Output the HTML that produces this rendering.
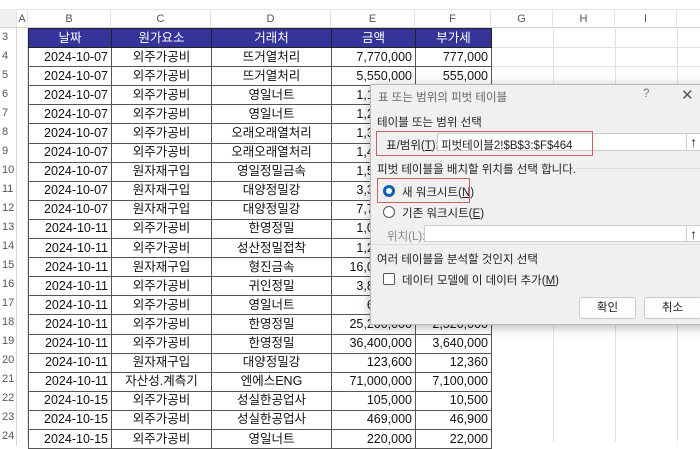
<!DOCTYPE html>
<html><head><meta charset="utf-8"><style>
*{margin:0;padding:0;box-sizing:border-box}
body{width:700px;height:442px;overflow:hidden;background:#fff;font-family:"Liberation Sans","Noto Sans CJK KR",sans-serif;position:relative}
.top{position:absolute;left:0;top:0;width:700px;height:10px;background:#fff;border-bottom:1px solid #e6e6e6}
.colh{position:absolute;top:10px;height:18px;background:#fff;border-bottom:1px solid #d4d4d4;font-size:11px;color:#555;text-align:center;line-height:18px;border-right:1px solid #e3e3e3}
.rowh{position:absolute;left:0;width:17px;height:19.1px;font-size:11px;color:#555;line-height:19px;padding-left:2px;border-right:1px solid #d4d4d4}
table{position:absolute;left:28px;top:28px;border-collapse:collapse;table-layout:fixed}
td{height:19.1px;border:1px solid #555;font-size:12.5px;color:#111;white-space:nowrap;overflow:hidden;padding:0 3px;line-height:17px}
td.c{text-align:center}td.r{text-align:right}
tr.h td{background:#333399;color:#fff;text-align:center;border-color:#222}
.gl{position:absolute;background:#e1e1e1}
.dlg{position:absolute;left:370px;top:84px;width:340px;height:241px;background:#f0f0f0;border:1px solid #bbb;box-shadow:0 2px 10px rgba(0,0,0,.3);font-size:11.5px;color:#222}
.dlg .t{position:absolute;left:7px;top:4px;color:#666;font-size:11.5px}
.ab{position:absolute}
.inp{position:absolute;background:#fff;border:1px solid #ccc;height:18px}
.up{position:absolute;width:15px;height:18px;background:#fff;border:1px solid #ccc;font-size:14px;font-weight:bold;text-align:center;line-height:16px}
.red{position:absolute;border:1.5px solid #d06060}
.btn{position:absolute;width:57px;height:22px;background:#fdfdfd;border:1px solid #ccc;border-radius:3px;text-align:center;line-height:20px}
.sep{position:absolute;height:1px;background:#ddd}
</style></head><body>
<div class="top"></div>
<div class="colh" style="left:0;width:17px;background:#f0f0f0"></div>
<div class="colh" style="left:17px;width:11px">A</div>
<div class="colh" style="left:28px;width:83px">B</div>
<div class="colh" style="left:111px;width:100px">C</div>
<div class="colh" style="left:211px;width:120px">D</div>
<div class="colh" style="left:331px;width:84px">E</div>
<div class="colh" style="left:415px;width:76px">F</div>
<div class="colh" style="left:491px;width:62px">G</div>
<div class="colh" style="left:553px;width:62px">H</div>
<div class="colh" style="left:615px;width:62px">I</div>
<div class="colh" style="left:677px;width:30px"></div>
<div class="gl" style="left:553px;top:28px;width:1px;height:414px"></div>
<div class="gl" style="left:615px;top:28px;width:1px;height:414px"></div>
<div class="gl" style="left:677px;top:28px;width:1px;height:414px"></div>
<div class="gl" style="left:27px;top:28px;width:1px;height:414px"></div>
<div class="gl" style="left:491px;top:47px;width:209px;height:1px"></div>
<div class="gl" style="left:491px;top:66px;width:209px;height:1px"></div>
<div class="gl" style="left:491px;top:85px;width:209px;height:1px"></div>
<div class="rowh" style="top:28px">3</div><div class="rowh" style="top:47px">4</div><div class="rowh" style="top:66px">5</div><div class="rowh" style="top:85px">6</div><div class="rowh" style="top:104px">7</div><div class="rowh" style="top:123px">8</div><div class="rowh" style="top:142px">9</div><div class="rowh" style="top:161px">10</div><div class="rowh" style="top:180px">11</div><div class="rowh" style="top:199px">12</div><div class="rowh" style="top:218px">13</div><div class="rowh" style="top:237px">14</div><div class="rowh" style="top:256px">15</div><div class="rowh" style="top:275px">16</div><div class="rowh" style="top:294px">17</div><div class="rowh" style="top:313px">18</div><div class="rowh" style="top:332px">19</div><div class="rowh" style="top:351px">20</div><div class="rowh" style="top:370px">21</div><div class="rowh" style="top:389px">22</div><div class="rowh" style="top:408px">23</div><div class="rowh" style="top:427px">24</div>
<table>
<colgroup><col style="width:83px"><col style="width:100px"><col style="width:120px"><col style="width:84px"><col style="width:76px"></colgroup>
<tr class="h"><td>날짜</td><td>원가요소</td><td>거래처</td><td>금액</td><td>부가세</td></tr>
<tr><td class="r">2024-10-07</td><td class="c">외주가공비</td><td class="c">뜨거열처리</td><td class="r">7,770,000</td><td class="r">777,000</td></tr>
<tr><td class="r">2024-10-07</td><td class="c">외주가공비</td><td class="c">뜨거열처리</td><td class="r">5,550,000</td><td class="r">555,000</td></tr>
<tr><td class="r">2024-10-07</td><td class="c">외주가공비</td><td class="c">영일너트</td><td class="r">1,100,000</td><td class="r">110,000</td></tr>
<tr><td class="r">2024-10-07</td><td class="c">외주가공비</td><td class="c">영일너트</td><td class="r">1,200,000</td><td class="r">120,000</td></tr>
<tr><td class="r">2024-10-07</td><td class="c">외주가공비</td><td class="c">오래오래열처리</td><td class="r">1,300,000</td><td class="r">130,000</td></tr>
<tr><td class="r">2024-10-07</td><td class="c">외주가공비</td><td class="c">오래오래열처리</td><td class="r">1,400,000</td><td class="r">140,000</td></tr>
<tr><td class="r">2024-10-07</td><td class="c">원자재구입</td><td class="c">영일정밀금속</td><td class="r">1,500,000</td><td class="r">150,000</td></tr>
<tr><td class="r">2024-10-07</td><td class="c">원자재구입</td><td class="c">대양정밀강</td><td class="r">3,300,000</td><td class="r">330,000</td></tr>
<tr><td class="r">2024-10-07</td><td class="c">원자재구입</td><td class="c">대양정밀강</td><td class="r">7,700,000</td><td class="r">770,000</td></tr>
<tr><td class="r">2024-10-11</td><td class="c">외주가공비</td><td class="c">한영정밀</td><td class="r">1,000,000</td><td class="r">100,000</td></tr>
<tr><td class="r">2024-10-11</td><td class="c">외주가공비</td><td class="c">성산정밀접착</td><td class="r">1,200,000</td><td class="r">120,000</td></tr>
<tr><td class="r">2024-10-11</td><td class="c">원자재구입</td><td class="c">형진금속</td><td class="r">16,000,000</td><td class="r">1,600,000</td></tr>
<tr><td class="r">2024-10-11</td><td class="c">외주가공비</td><td class="c">귀인정밀</td><td class="r">3,800,000</td><td class="r">380,000</td></tr>
<tr><td class="r">2024-10-11</td><td class="c">외주가공비</td><td class="c">영일너트</td><td class="r">600,000</td><td class="r">60,000</td></tr>
<tr><td class="r">2024-10-11</td><td class="c">외주가공비</td><td class="c">한영정밀</td><td class="r">25,200,000</td><td class="r">2,520,000</td></tr>
<tr><td class="r">2024-10-11</td><td class="c">외주가공비</td><td class="c">한영정밀</td><td class="r">36,400,000</td><td class="r">3,640,000</td></tr>
<tr><td class="r">2024-10-11</td><td class="c">원자재구입</td><td class="c">대양정밀강</td><td class="r">123,600</td><td class="r">12,360</td></tr>
<tr><td class="r">2024-10-11</td><td class="c">자산성.계측기</td><td class="c">엔에스ENG</td><td class="r">71,000,000</td><td class="r">7,100,000</td></tr>
<tr><td class="r">2024-10-15</td><td class="c">외주가공비</td><td class="c">성실한공업사</td><td class="r">105,000</td><td class="r">10,500</td></tr>
<tr><td class="r">2024-10-15</td><td class="c">외주가공비</td><td class="c">성실한공업사</td><td class="r">469,000</td><td class="r">46,900</td></tr>
<tr><td class="r">2024-10-15</td><td class="c">외주가공비</td><td class="c">영일너트</td><td class="r">220,000</td><td class="r">22,000</td></tr>
</table>
<div class="dlg">
<div class="t">표 또는 범위의 피벗 테이블</div>
<div class="ab" style="left:272px;top:3px;color:#777">?</div>
<div class="ab" style="left:310px;top:1px;color:#555;font-size:15px">✕</div>
<div class="ab" style="left:6px;top:29px">테이블 또는 범위 선택</div>
<div class="ab" style="left:15px;top:52px">표/범위(<u>T</u>):</div>
<div class="inp" style="left:66px;top:48px;width:253px"></div>
<div class="ab" style="left:70px;top:52px">피벗테이블2!$B$3:$F$464</div>
<div class="up" style="left:315px;top:48px">↑</div>
<div class="red" style="left:5px;top:46px;width:217px;height:25px"></div>
<div class="ab" style="left:6px;top:76px">피벗 테이블을 배치할 위치를 선택 합니다.</div>
<div class="sep" style="left:205px;top:83px;width:135px"></div>
<div class="ab" style="left:12px;top:100px;width:12px;height:12px;border-radius:50%;border:3.5px solid #0a5fb4;background:#fff"></div>
<div class="ab" style="left:31px;top:99px">새 워크시트(<u>N</u>)</div>
<div class="red" style="left:6px;top:93px;width:93px;height:25px"></div>
<div class="ab" style="left:12px;top:121px;width:12px;height:12px;border-radius:50%;border:1px solid #555;background:#fff"></div>
<div class="ab" style="left:31px;top:120px">기존 워크시트(<u>E</u>)</div>
<div class="ab" style="left:16px;top:143px;color:#888">위치(L):</div>
<div class="inp" style="left:53px;top:140px;width:266px;height:17px"></div>
<div class="up" style="left:315px;top:140px;height:17px">↑</div>
<div class="sep" style="left:0;top:159px;width:340px"></div>
<div class="ab" style="left:6px;top:166px">여러 테이블을 분석할 것인지 선택</div>
<div class="ab" style="left:12px;top:188px;width:12px;height:12px;border:1px solid #555;border-radius:2px;background:#fff"></div>
<div class="ab" style="left:31px;top:187px">데이터 모델에 이 데이터 추가(<u>M</u>)</div>
<div class="btn" style="left:208px;top:212px">확인</div>
<div class="btn" style="left:273px;top:212px">취소</div>
</div>
</body></html>
